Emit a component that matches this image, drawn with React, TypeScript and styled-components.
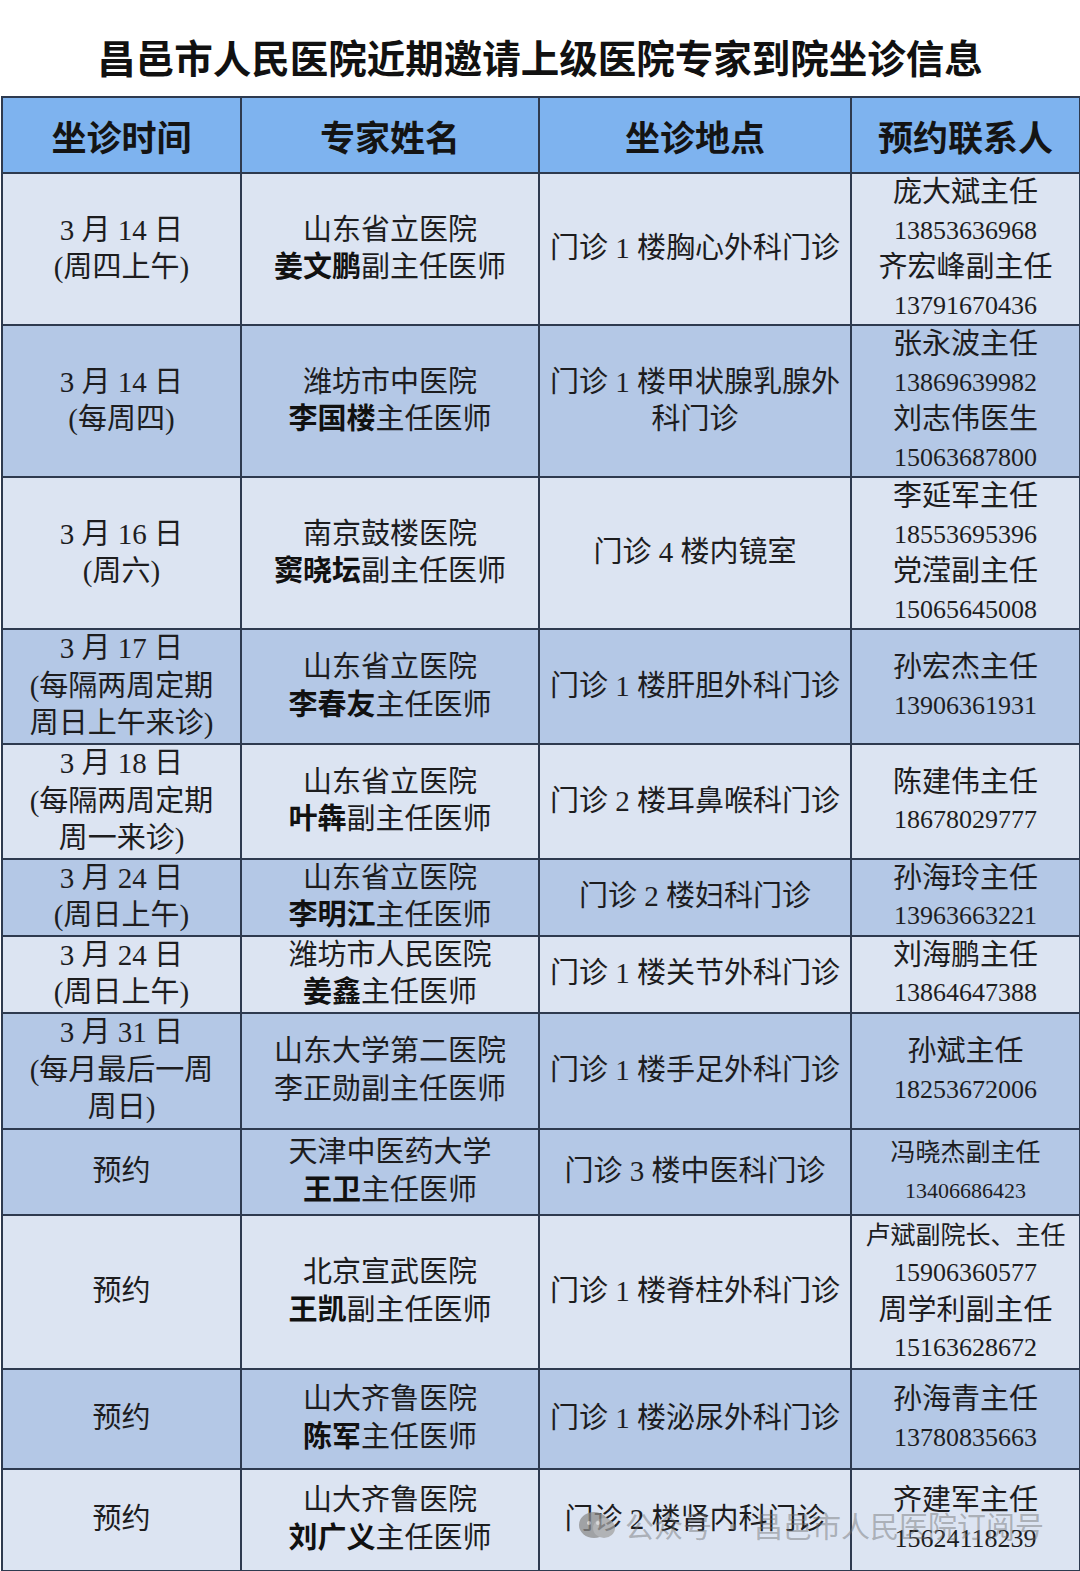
import React from 'react';
import styled, { createGlobalStyle } from 'styled-components';

type Shade = 'light' | 'dark';
type ContactLine = { text: string; kind?: 'name' | 'phone' | 'small' | 'smallPhone' };

type Entry = {
  shade: Shade;
  height: number;
  time: string[];
  hospital: string;
  name?: string;
  rank: string;
  place: string[];
  contacts: ContactLine[];
};

const columns = [
  { label: '坐诊时间', width: 239 },
  { label: '专家姓名', width: 298 },
  { label: '坐诊地点', width: 312 },
  { label: '预约联系人', width: 229 },
];

const n = (text: string): ContactLine => ({ text, kind: 'name' });
const p = (text: string): ContactLine => ({ text, kind: 'phone' });

const entries: Entry[] = [
  {
    shade: 'light',
    height: 152,
    time: ['3 月 14 日', '(周四上午)'],
    hospital: '山东省立医院',
    name: '姜文鹏',
    rank: '副主任医师',
    place: ['门诊 1 楼胸心外科门诊'],
    contacts: [n('庞大斌主任'), p('13853636968'), n('齐宏峰副主任'), p('13791670436')],
  },
  {
    shade: 'dark',
    height: 152,
    time: ['3 月 14 日', '(每周四)'],
    hospital: '潍坊市中医院',
    name: '李国楼',
    rank: '主任医师',
    place: ['门诊 1 楼甲状腺乳腺外', '科门诊'],
    contacts: [n('张永波主任'), p('13869639982'), n('刘志伟医生'), p('15063687800')],
  },
  {
    shade: 'light',
    height: 152,
    time: ['3 月 16 日', '(周六)'],
    hospital: '南京鼓楼医院',
    name: '窦晓坛',
    rank: '副主任医师',
    place: ['门诊 4 楼内镜室'],
    contacts: [n('李延军主任'), p('18553695396'), n('党滢副主任'), p('15065645008')],
  },
  {
    shade: 'dark',
    height: 115,
    time: ['3 月 17 日', '(每隔两周定期', '周日上午来诊)'],
    hospital: '山东省立医院',
    name: '李春友',
    rank: '主任医师',
    place: ['门诊 1 楼肝胆外科门诊'],
    contacts: [n('孙宏杰主任'), p('13906361931')],
  },
  {
    shade: 'light',
    height: 114,
    time: ['3 月 18 日', '(每隔两周定期', '周一来诊)'],
    hospital: '山东省立医院',
    name: '叶犇',
    rank: '副主任医师',
    place: ['门诊 2 楼耳鼻喉科门诊'],
    contacts: [n('陈建伟主任'), p('18678029777')],
  },
  {
    shade: 'dark',
    height: 77,
    time: ['3 月 24 日', '(周日上午)'],
    hospital: '山东省立医院',
    name: '李明江',
    rank: '主任医师',
    place: ['门诊 2 楼妇科门诊'],
    contacts: [n('孙海玲主任'), p('13963663221')],
  },
  {
    shade: 'light',
    height: 76,
    time: ['3 月 24 日', '(周日上午)'],
    hospital: '潍坊市人民医院',
    name: '姜鑫',
    rank: '主任医师',
    place: ['门诊 1 楼关节外科门诊'],
    contacts: [n('刘海鹏主任'), p('13864647388')],
  },
  {
    shade: 'dark',
    height: 116,
    time: ['3 月 31 日', '(每月最后一周', '周日)'],
    hospital: '山东大学第二医院',
    rank: '李正勋副主任医师',
    place: ['门诊 1 楼手足外科门诊'],
    contacts: [n('孙斌主任'), p('18253672006')],
  },
  {
    shade: 'dark',
    height: 86,
    time: ['预约'],
    hospital: '天津中医药大学',
    name: '王卫',
    rank: '主任医师',
    place: ['门诊 3 楼中医科门诊'],
    contacts: [
      { text: '冯晓杰副主任', kind: 'small' },
      { text: '13406686423', kind: 'smallPhone' },
    ],
  },
  {
    shade: 'light',
    height: 154,
    time: ['预约'],
    hospital: '北京宣武医院',
    name: '王凯',
    rank: '副主任医师',
    place: ['门诊 1 楼脊柱外科门诊'],
    contacts: [
      { text: '卢斌副院长、主任', kind: 'small' },
      p('15906360577'),
      n('周学利副主任'),
      p('15163628672'),
    ],
  },
  {
    shade: 'dark',
    height: 100,
    time: ['预约'],
    hospital: '山大齐鲁医院',
    name: '陈军',
    rank: '主任医师',
    place: ['门诊 1 楼泌尿外科门诊'],
    contacts: [n('孙海青主任'), p('13780835663')],
  },
  {
    shade: 'light',
    height: 102,
    time: ['预约'],
    hospital: '山大齐鲁医院',
    name: '刘广义',
    rank: '主任医师',
    place: ['门诊 2 楼肾内科门诊'],
    contacts: [n('齐建军主任'), p('15624118239')],
  },
];

const App = () => {
  return (
    <Page>
      <GlobalStyle />
      <Title>昌邑市人民医院近期邀请上级医院专家到院坐诊信息</Title>
      <TableWrap>
        <Table>
          <colgroup>
            {columns.map((c) => (
              <Col key={c.label} $w={c.width} />
            ))}
          </colgroup>
          <thead>
            <tr>
              {columns.map((c) => (
                <HeadCell key={c.label}>{c.label}</HeadCell>
              ))}
            </tr>
          </thead>
          <tbody>
            {entries.map((e, i) => (
              <Row key={i} $h={e.height}>
                <Cell $shade={e.shade}>
                  {e.time.map((t) => (
                    <Line key={t}>{t}</Line>
                  ))}
                </Cell>
                <Cell $shade={e.shade}>
                  <Line>{e.hospital}</Line>
                  <Line>
                    {e.name && <Name>{e.name}</Name>}
                    {e.rank}
                  </Line>
                </Cell>
                <Cell $shade={e.shade}>
                  {e.place.map((t) => (
                    <Line key={t}>{t}</Line>
                  ))}
                </Cell>
                <Cell $shade={e.shade}>
                  {e.contacts.map((c) => (
                    <Contact key={c.text} $kind={c.kind || 'name'}>
                      {c.text}
                    </Contact>
                  ))}
                </Cell>
              </Row>
            ))}
          </tbody>
        </Table>
        <Watermark>
          <svg width="40" height="34" viewBox="0 0 40 34">
            <ellipse cx="17" cy="17" rx="15" ry="13" fill="#8c8c8c" />
            <ellipse cx="27" cy="20" rx="11" ry="10" fill="#a3a3a3" />
            <circle cx="12" cy="15" r="2" fill="#d6d6d6" />
            <circle cx="21" cy="15" r="2" fill="#d6d6d6" />
          </svg>
          <span>公众号 · 昌邑市人民医院订阅号</span>
        </Watermark>
      </TableWrap>
    </Page>
  );
};

export default App;

const GlobalStyle = createGlobalStyle`
  html, body {
    margin: 0;
    padding: 0;
    background: #ffffff;
  }
  body {
    font-family: "Liberation Serif", "Noto Sans CJK SC", serif;
    color: #1d1d1f;
  }
`;

const Page = styled.div`
  width: 1080px;
`;

const Title = styled.h1`
  margin: 0;
  height: 96px;
  box-sizing: border-box;
  padding-top: 36px;
  text-align: center;
  font-family: "Noto Sans CJK SC", sans-serif;
  font-weight: 700;
  font-size: 38.5px;
  line-height: 40px;
  color: #111;
`;

const TableWrap = styled.div`
  position: relative;
  padding-left: 1px;
`;

const Table = styled.table`
  width: 1078px;
  table-layout: fixed;
  border-collapse: collapse;
  border: 2px solid #2e3a4f;
`;

const Col = styled.col<{ $w: number }>`
  width: ${(props) => props.$w}px;
`;

const HeadCell = styled.th`
  height: 74px;
  padding: 0;
  background: #7eb3ef;
  border: 2px solid #2e3a4f;
  font-family: "Noto Sans CJK SC", sans-serif;
  font-weight: 700;
  font-size: 35px;
  color: #141414;
  text-align: center;
  vertical-align: middle;
`;

const Row = styled.tr<{ $h: number }>`
  height: ${(props) => props.$h}px;
`;

const Cell = styled.td<{ $shade: Shade }>`
  padding: 0;
  background: ${(props) => (props.$shade === 'dark' ? '#b4c8e6' : '#dce4f2')};
  border: 2px solid #2e3a4f;
  text-align: center;
  vertical-align: middle;
  font-size: 29px;
  line-height: 37.5px;
  white-space: nowrap;
`;

const Line = styled.div`
  display: block;
`;

const Name = styled.span`
  font-weight: 700;
  color: #111;
`;

const Contact = styled.div<{ $kind: string }>`
  font-size: ${(props) =>
    props.$kind === 'phone'
      ? '26px'
      : props.$kind === 'small'
      ? '25px'
      : props.$kind === 'smallPhone'
      ? '22px'
      : '29px'};
  line-height: 37.5px;
`;

const Watermark = styled.div`
  position: absolute;
  right: 36px;
  bottom: 26px;
  display: flex;
  align-items: center;
  gap: 8px;
  font-family: "Noto Sans CJK SC", sans-serif;
  font-size: 29px;
  color: rgba(110, 110, 110, 0.45);
  pointer-events: none;

  svg {
    opacity: 0.75;
  }
`;
